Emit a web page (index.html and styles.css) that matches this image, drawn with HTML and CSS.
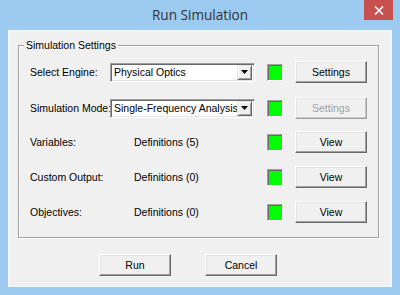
FILE: index.html
```html
<!DOCTYPE html>
<html>
<head>
<meta charset="utf-8">
<link rel="stylesheet" href="styles.css">
</head>
<body>
<div class="window">
  <div class="titlebar">
    <div class="title">Run Simulation</div>
    <div class="close"><svg width="10" height="9" viewBox="0 0 10 9"><path d="M1 0.5 L9 8.5 M9 0.5 L1 8.5" stroke="#fff" stroke-width="1.6"/></svg></div>
  </div>
  <div class="client">
    <fieldset class="group">
      <legend>Simulation Settings</legend>
      <div class="grid">
        <span class="label">Select Engine:</span>
        <div class="combo"><span class="combo-text">Physical Optics</span><span class="drop"><svg width="7" height="4" viewBox="0 0 7 4"><path d="M0 0h7L3.5 4z" fill="#000"/></svg></span></div>
        <span class="status"></span>
        <button class="btn">Settings</button>

        <span class="label">Simulation Mode:</span>
        <div class="combo"><span class="combo-text">Single-Frequency Analysis</span><span class="drop"><svg width="7" height="4" viewBox="0 0 7 4"><path d="M0 0h7L3.5 4z" fill="#000"/></svg></span></div>
        <span class="status"></span>
        <button class="btn disabled">Settings</button>

        <span class="label">Variables:</span>
        <span class="defs">Definitions (5)</span>
        <span class="status"></span>
        <button class="btn">View</button>

        <span class="label">Custom Output:</span>
        <span class="defs">Definitions (0)</span>
        <span class="status"></span>
        <button class="btn">View</button>

        <span class="label">Objectives:</span>
        <span class="defs">Definitions (0)</span>
        <span class="status"></span>
        <button class="btn">View</button>
      </div>
    </fieldset>
    <div class="actions">
      <button class="btn">Run</button>
      <button class="btn">Cancel</button>
    </div>
  </div>
</div>
</body>
</html>
```
FILE: styles.css
```css
html, body {
  margin: 0;
  padding: 0;
}
body {
  width: 400px;
  height: 295px;
  overflow: hidden;
  font: 10.5px "Liberation Sans", Arial, sans-serif;
  color: #000;
}
.window {
  width: 400px;
  height: 295px;
  background: #9ccaf0;
  display: flex;
  flex-direction: column;
  box-sizing: border-box;
}
.titlebar {
  height: 30px;
  flex: none;
  display: grid;
  grid-template-columns: 1fr auto 1fr;
  padding: 0 7px;
}
.title {
  grid-column: 2;
  align-self: center;
  font: 13.6px "Open Sans", sans-serif;
  color: #333;
  margin-top: -1px;
}
.close {
  grid-column: 3;
  justify-self: end;
  align-self: start;
  width: 29px;
  height: 20px;
  background: #c75050;
  display: flex;
  align-items: center;
  justify-content: center;
}
.client {
  flex: 1;
  margin: 0 8px 8px;
  background: #f0f0f0;
  border: 1px solid #f7fafd;
  display: flex;
  flex-direction: column;
}
.group {
  margin: 8px 12px 0 9px;
  padding: 9px 12px 14px 11px;
  border: 1px solid #a0a0a0;
  box-shadow: 1px 1px 0 #fff, inset 1px 1px 0 #fff;
  min-width: 0;
}
.group legend {
  padding: 0 2px;
  margin-left: -6px;
  line-height: 13px;
}
.grid {
  display: grid;
  grid-template-columns: 68px 145px 16px 72px;
  grid-template-rows: 22px 22px 22px 22px 22px;
  column-gap: 12px;
  row-gap: 13px;
  align-items: center;
}
.grid > :nth-child(n+5):nth-child(-n+8) {
  margin-top: 2px;
}
.label {
  white-space: nowrap;
}
.defs {
  padding-left: 24px;
  white-space: nowrap;
}
.combo {
  height: 19px;
  box-sizing: border-box;
  background: #fff;
  border: 1px solid;
  border-color: #a0a0a0 #fff #fff #a0a0a0;
  box-shadow: inset 1px 1px 0 #696969, inset -1px -1px 0 #e3e3e3;
  display: flex;
  align-items: center;
  padding: 2px 2px 2px 3px;
}
.combo-text {
  flex: 1;
  white-space: nowrap;
  overflow: hidden;
}
.drop {
  width: 15px;
  height: 15px;
  box-sizing: border-box;
  background: #f0f0f0;
  border: 1px solid;
  border-color: #e3e3e3 #696969 #696969 #e3e3e3;
  box-shadow: inset 1px 1px 0 #fff, inset -1px -1px 0 #a0a0a0;
  display: flex;
  align-items: center;
  justify-content: center;
}
.status {
  width: 16px;
  height: 17px;
  box-sizing: border-box;
  background: #00ff00;
  border: 1px solid;
  border-color: #a0a0a0 #fff #fff #a0a0a0;
  box-shadow: inset 1px 1px 0 #696969;
}
.btn {
  width: 72px;
  height: 22px;
  box-sizing: border-box;
  padding: 0;
  font: 10.5px "Liberation Sans", Arial, sans-serif;
  color: #000;
  background: #f0f0f0;
  border: 1px solid;
  border-color: #fff #696969 #696969 #fff;
  box-shadow: inset -1px -1px 0 #a0a0a0, inset 1px 1px 0 #e3e3e3;
}
.btn.disabled {
  color: #a0a0a0;
  border-color: #fff #a0a0a0 #a0a0a0 #fff;
  box-shadow: inset -1px -1px 0 #c8c8c8, inset 1px 1px 0 #e3e3e3;
}
.actions {
  display: flex;
  gap: 34px;
  padding-left: 90px;
  margin-top: 16px;
}
```
